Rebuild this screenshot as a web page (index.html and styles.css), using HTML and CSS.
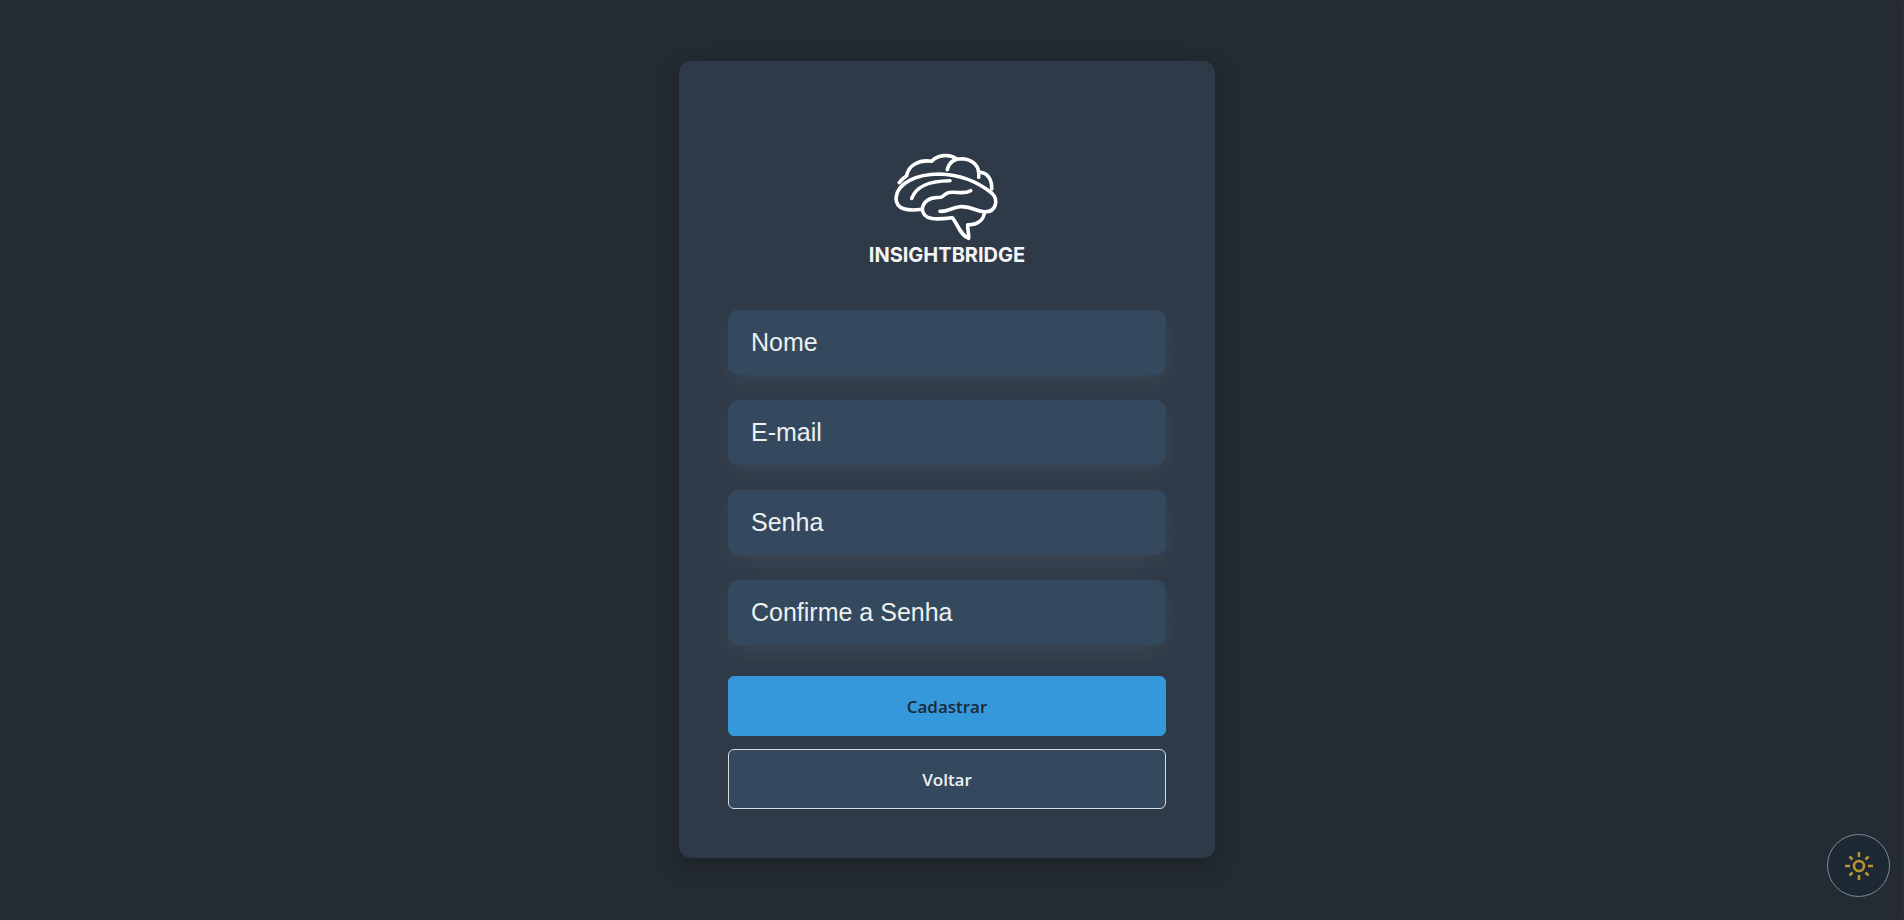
FILE: index.html
```html
<!DOCTYPE html>
<html lang="pt-BR">
<head>
<meta charset="utf-8">
<meta name="viewport" content="width=device-width, initial-scale=1">
<title>InsightBridge - Cadastro</title>
<link rel="stylesheet" href="styles.css">
</head>
<body>
<main class="page">
  <form class="card">
    <div class="brand">
      <svg class="brand-icon" viewBox="0 0 108 90" aria-hidden="true">
        <path d="M6.300 30.700C8.500 27 11 26 13.700 23.700C15 14 26 7 38.700 9.300C45 2.500 56 2 63 6.500"/>
        <path d="M54.300 17.700C56 10 62 6.700 69 6.700C80 7.500 87 14 85.700 25.300"/>
        <path d="M87 20.300C95 21 99 28 98.700 37"/>
        <path d="M28.700 57.300C15 59 3 58 3 46C4 31 24 22 46 22C68 22.500 85 30 98.700 41C106 48 103 60 92 59.700C83 60 80 54 67 54.700C59 55.500 54 60 47 59.300"/>
        <path d="M18.700 46.300C23 35 34 29 57 28.700"/>
        <path d="M77.700 38.700C70 43 63 39 56 40.500C50 42 51 45.500 46 45.500C36 45 30 50 29.300 57C30 68 42 68 59.300 65.700C65 73 68 84 75.700 86.300C76 81 74.500 79 74.700 72.700C84 73.500 91 68 91.500 60"/>
      </svg>
      <span class="brand-name">INSIGHTBRIDGE</span>
    </div>
    <div class="fields">
      <input class="field" type="text" placeholder="Nome" aria-label="Nome">
      <input class="field" type="email" placeholder="E-mail" aria-label="E-mail">
      <input class="field" type="password" placeholder="Senha" aria-label="Senha">
      <input class="field" type="password" placeholder="Confirme a Senha" aria-label="Confirme a Senha">
    </div>
    <div class="actions">
      <button class="button button-primary" type="submit">Cadastrar</button>
      <button class="button button-secondary" type="button">Voltar</button>
    </div>
  </form>
  <button class="theme-toggle" type="button" aria-label="Alternar tema">
    <svg class="sun" viewBox="0 0 28 28" aria-hidden="true">
      <circle cx="14" cy="14" r="5"/>
      <path d="M14 0v5M14 23v5M0 14h5M23 14h5M4.500 4.500l3 3M20.500 20.500l3 3M4.500 23.500l3-3M20.500 7.500l3-3"/>
    </svg>
  </button>
</main>
</body>
</html>
```
FILE: styles.css
```css
* {
  box-sizing: border-box;
}

body {
  margin: 0;
  padding-right: 2px;
  background: #2e2e2e;
  font-family: "Open Sans", "Noto Sans", sans-serif;
}

.page {
  min-height: 100vh;
  padding: 24px 8px 25px 0;
  display: flex;
  align-items: center;
  justify-content: center;
  background: #242b32;
  border-radius: 0 8px 8px 0;
}

.card {
  width: 100%;
  max-width: 536px;
  padding: 91px 49px 49px;
  display: flex;
  flex-direction: column;
  background: #2f3a48;
  border-radius: 12px;
  box-shadow: 0 8px 24px rgba(0, 0, 0, 0.25);
}

.brand {
  display: flex;
  flex-direction: column;
  align-items: center;
  gap: 3px;
  margin-bottom: 45px;
}

.brand-icon {
  width: 108px;
  height: 90px;
  fill: none;
  stroke: #ffffff;
  stroke-width: 3.6;
  stroke-linecap: round;
  stroke-linejoin: round;
}

.brand-name {
  color: #f5f5f7;
  font: 700 20px/20px Inter, sans-serif;
}

.fields {
  display: flex;
  flex-direction: column;
  gap: 25px;
  margin-bottom: 31px;
}

.field {
  width: 100%;
  height: 65px;
  padding: 0 23px;
  border: 0;
  border-radius: 10px;
  background: #34495e;
  color: #ecf0f1;
  font: 25px "Liberation Sans", Arial, sans-serif;
  box-shadow: 0 8px 24px rgba(255, 255, 255, 0.06);
}

.field::placeholder {
  color: #ecf0f1;
  opacity: 1;
}

.actions {
  display: flex;
  flex-direction: column;
  gap: 13px;
}

.button {
  height: 60px;
  border: 1px solid #3498db;
  border-radius: 6px;
  font: 600 17px "Open Sans", "Noto Sans", sans-serif;
  cursor: pointer;
}

.button-primary {
  background: #3498db;
  color: #1c2833;
}

.button-secondary {
  border-color: #d5dbdf;
  background: #34495e;
  color: #ecf0f1;
}

.theme-toggle {
  position: fixed;
  right: 14px;
  bottom: 23px;
  width: 63px;
  height: 63px;
  padding: 0;
  display: grid;
  place-items: center;
  border: 1px solid #7f8a94;
  border-radius: 50%;
  background: #1c2833;
  cursor: pointer;
}

.sun {
  width: 28px;
  height: 28px;
  fill: none;
  stroke: #b8932f;
  stroke-width: 2.6;
}
```
